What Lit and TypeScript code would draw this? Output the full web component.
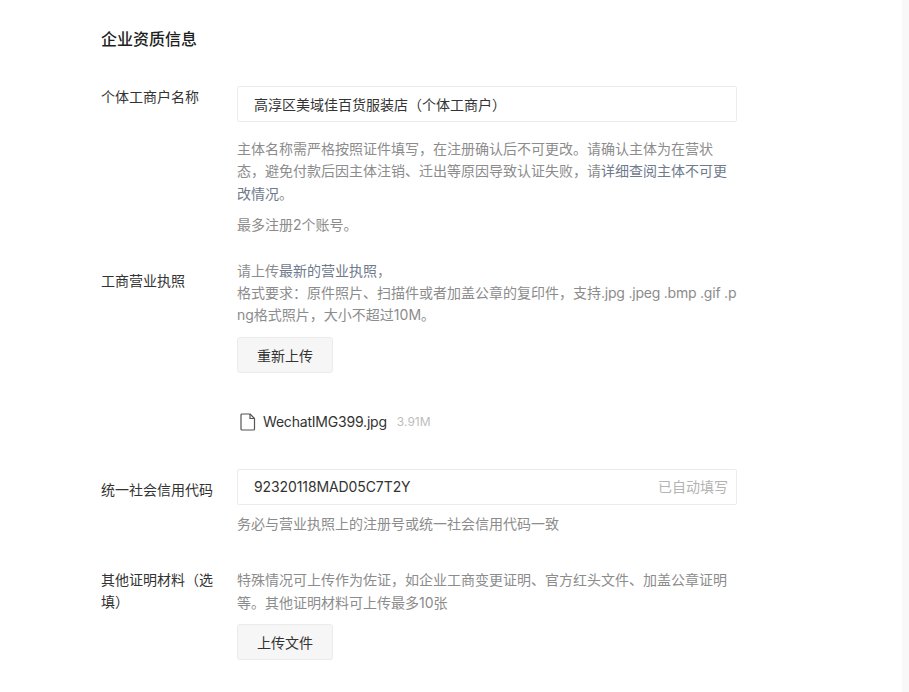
import { LitElement, html, css } from "lit";
import { customElement } from "lit/decorators.js";

@customElement("app-root")
export class AppRoot extends LitElement {
  static styles = css`
    :host {
      display: block;
      background: #fff;
      font-family: Inter, "Noto Sans CJK SC", "Liberation Sans", sans-serif;
      font-size: 14px;
      color: #2b2b2b;
    }
    .page {
      display: flex;
      height: 692px;
      overflow: hidden;
    }
    .main {
      flex: 1;
      padding: 28px 0 0 101px;
    }
    .rail {
      width: 7px;
      background: #f8f8f8;
    }
    h1 {
      margin: 0 0 36px;
      font-size: 16px;
      line-height: 22px;
      font-weight: 500;
      color: #1f1f1f;
    }
    .row {
      display: flex;
      gap: 24px;
    }
    .label {
      width: 112px;
      flex: none;
      line-height: 22px;
      color: #333;
    }
    .body {
      width: 500px;
    }
    .input {
      box-sizing: border-box;
      height: 36px;
      display: flex;
      align-items: center;
      justify-content: space-between;
      padding: 0 8px 0 16px;
      border: 1px solid #ececec;
      border-radius: 2px;
      color: #333;
    }
    .code {
      letter-spacing: -0.1px;
    }
    .auto {
      color: #b4b4b4;
      margin-bottom: 2px;
    }
    .hint {
      margin: 0;
      color: #8c8c8c;
      line-height: 22.4px;
      word-break: break-all;
    }
    .link {
      color: #6f7a8c;
    }
    .ext {
      letter-spacing: -0.22px;
    }
    .btn {
      display: block;
      box-sizing: border-box;
      width: 96px;
      height: 36px;
      padding: 0;
      background: #f6f6f6;
      border: 1px solid #ebebeb;
      border-radius: 3px;
      font: inherit;
      color: #333;
    }
    .file {
      display: flex;
      align-items: center;
      height: 24px;
      padding-left: 3px;
      color: #333;
    }
    .file svg {
      display: block;
      margin-right: 7px;
    }
    .name {
      letter-spacing: -0.2px;
    }
    .size {
      margin-left: 10px;
      font-size: 12px;
      color: #bdbdbd;
    }
    .r1 { margin-bottom: 23px; }
    .r1 .input { padding-bottom: 1px; }
    .r1 .first { margin-top: 16px; }
    .r1 .second { margin-top: 9px; }
    .r2 { margin-bottom: 35px; }
    .r2 .label { margin-top: 10px; }
    .r2 .btn { margin-top: 10px; }
    .r2 .file { margin-top: 37px; }
    .r3 { margin-bottom: 34px; }
    .r3 .label { margin-top: 10px; }
    .r3 .hint { margin-top: 8px; }
    .r4 .btn { margin-top: 10px; }
  `;

  render() {
    return html`
      <div class="page">
        <div class="main">
          <h1>企业资质信息</h1>
          <div class="row r1">
            <div class="label">个体工商户名称</div>
            <div class="body">
              <div class="input">高淳区美域佳百货服装店（个体工商户）</div>
              <p class="hint first">主体名称需严格按照证件填写，在注册确认后不可更改。请确认主体为在营状态，避免付款后因主体注销、迁出等原因导致认证失败，请<span class="link">详细查阅主体不可更</span><span class="link">改情况</span>。</p>
              <p class="hint second">最多注册2个账号。</p>
            </div>
          </div>
          <div class="row r2">
            <div class="label">工商营业执照</div>
            <div class="body">
              <p class="hint">请上传<span class="link">最新的营业执照</span>，<br />格式要求：原件照片、扫描件或者加盖公章的复印件，支持<span class="ext">.jpg .jpeg .bmp .gif .p</span><span>ng格式照片，大小不超过10M。</span></p>
              <button class="btn">重新上传</button>
              <div class="file">
                <svg width="16" height="18" viewBox="0 0 16 18" fill="none" stroke="#555" stroke-width="1.2" stroke-linejoin="round">
                  <path d="M2 1h8l4.5 4.5V16a1 1 0 0 1-1 1H2a1 1 0 0 1-1-1V2a1 1 0 0 1 1-1z" />
                  <path d="M10 1v4.5h4.5" />
                </svg>
                <span class="name">WechatIMG399.jpg</span><span class="size">3.91M</span>
              </div>
            </div>
          </div>
          <div class="row r3">
            <div class="label">统一社会信用代码</div>
            <div class="body">
              <div class="input"><span class="code">92320118MAD05C7T2Y</span><span class="auto">已自动填写</span></div>
              <p class="hint">务必与营业执照上的注册号或统一社会信用代码一致</p>
            </div>
          </div>
          <div class="row r4">
            <div class="label">其他证明材料（选填）</div>
            <div class="body">
              <p class="hint">特殊情况可上传作为佐证，如企业工商变更证明、官方红头文件、加盖公章证明等。其他证明材料可上传最多10张</p>
              <button class="btn">上传文件</button>
            </div>
          </div>
        </div>
        <div class="rail"></div>
      </div>
    `;
  }
}
